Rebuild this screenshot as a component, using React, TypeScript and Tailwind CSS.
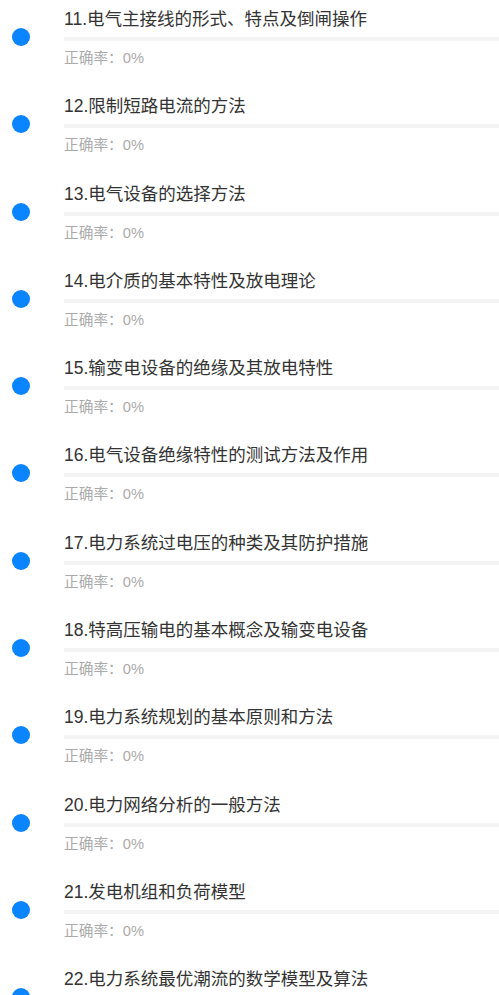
const chapters = [
  "11.电气主接线的形式、特点及倒闸操作",
  "12.限制短路电流的方法",
  "13.电气设备的选择方法",
  "14.电介质的基本特性及放电理论",
  "15.输变电设备的绝缘及其放电特性",
  "16.电气设备绝缘特性的测试方法及作用",
  "17.电力系统过电压的种类及其防护措施",
  "18.特高压输电的基本概念及输变电设备",
  "19.电力系统规划的基本原则和方法",
  "20.电力网络分析的一般方法",
  "21.发电机组和负荷模型",
  "22.电力系统最优潮流的数学模型及算法",
];

export default function App() {
  return (
    <div className="w-[499px] h-[995px] overflow-hidden bg-white font-['Liberation_Sans','Noto_Sans_CJK_SC',sans-serif]">
      {chapters.map((title) => (
        <div key={title} className="flex h-[87.3px] items-start">
          <div className="w-[64px] flex justify-center pt-[28px] pr-[22px]">
            <div className="w-[18px] h-[18px] rounded-full bg-[#0a84ff] shrink-0" />
          </div>
          <div className="flex-1 pt-[7px]">
            <div className="text-[17.5px] leading-[24px] text-[#333] whitespace-nowrap">{title}</div>
            <div className="mt-[6px] h-[4px] bg-[#f4f4f4]" />
            <div className="mt-[7px] text-[14.7px] leading-[20px] text-[#aaa]">正确率：0%</div>
          </div>
        </div>
      ))}
    </div>
  );
}
